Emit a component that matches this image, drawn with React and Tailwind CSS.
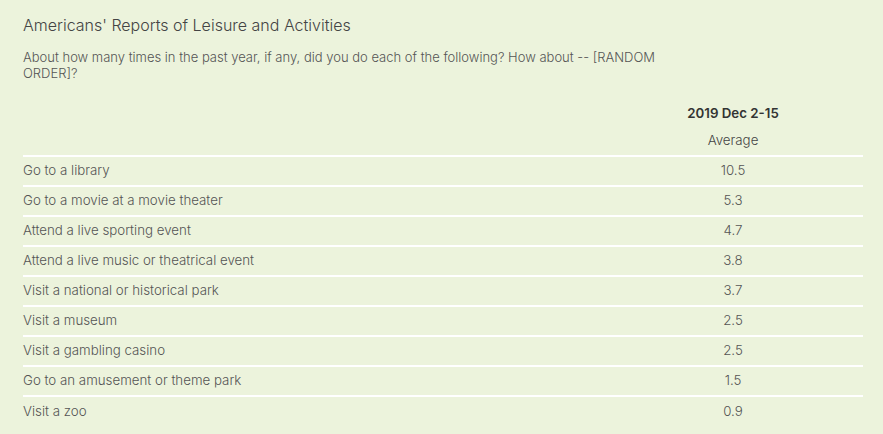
const rows = [
  ['Go to a library', '10.5'],
  ['Go to a movie at a movie theater', '5.3'],
  ['Attend a live sporting event', '4.7'],
  ['Attend a live music or theatrical event', '3.8'],
  ['Visit a national or historical park', '3.7'],
  ['Visit a museum', '2.5'],
  ['Visit a gambling casino', '2.5'],
  ['Go to an amusement or theme park', '1.5'],
  ['Visit a zoo', '0.9'],
];

export default function App() {
  return (
    <div className="w-[883px] h-[434px] bg-[#ecf3dc] text-[#555] font-['Inter',sans-serif] pl-[23px] pr-[20px] pt-[13px]">
      <h1 className="text-[16px] font-light text-[#444] leading-[24px]">Americans' Reports of Leisure and Activities</h1>
      <p className="mt-[12px] text-[13px] leading-[16px] font-light text-[#555] w-[650px]">
        About how many times in the past year, if any, did you do each of the following? How about -- [RANDOM ORDER]?
      </p>
      <table className="mt-[20px] w-[840px] border-collapse text-[13.3px] font-light">
        <thead>
          <tr>
            <th className="w-[580px]" />
            <th className="h-[26px] text-center font-semibold text-[#333]">2019 Dec 2-15</th>
          </tr>
          <tr className="border-b-2 border-white">
            <th />
            <th className="h-[29px] text-center font-light text-[#444]">Average</th>
          </tr>
        </thead>
        <tbody>
          {rows.map(([label, value], i) => (
            <tr key={label} className={i < rows.length - 1 ? 'border-b-2 border-white' : ''}>
              <td className="h-[30px] text-left">{label}</td>
              <td className="h-[30px] text-center">{value}</td>
            </tr>
          ))}
        </tbody>
      </table>
    </div>
  );
}
